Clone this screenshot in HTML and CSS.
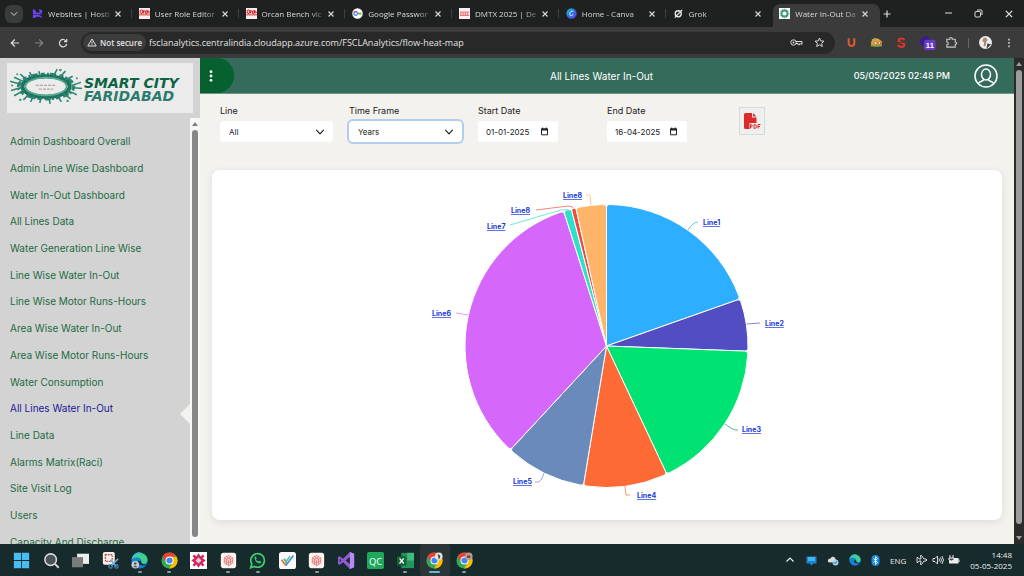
FILE: index.html
```html
<!DOCTYPE html>
<html lang="en">
<head>
<meta charset="utf-8">
<title>Water In-Out Dashboard</title>
<link rel="stylesheet" href="styles.css">
</head>
<body>
<svg class="defs" width="0" height="0" aria-hidden="true">
  <symbol id="x" viewBox="0 0 8 8"><path d="M1.5 1.5l5 5M6.5 1.5l-5 5" stroke="currentColor" stroke-width="1.1" fill="none"/></symbol>
  <symbol id="chev" viewBox="0 0 10 10"><path d="M1.500 3.200L5 6.800l3.500-3.600" stroke="currentColor" stroke-width="1.200" fill="none" stroke-linecap="round" stroke-linejoin="round"/></symbol>
  <symbol id="orcan" viewBox="0 0 12 12"><path fill="#f7eeee" d="M0 0h12v12H0z"/><path fill="#d8262c" d="M0 7h12v1H0z"/><path d="M1 5c0-3 3-4 3-1s-3 2-3 0M5 6V2.500M5 4l1.500-1M7 5c0-3 2-2 2-.5S7 7 7 5M9.500 6V3l1.500 1v2" stroke="#d8262c" stroke-width="1.100" fill="none"/></symbol>
  <symbol id="cal" viewBox="0 0 9 9"><path d="M1.500 2h6v5.800h-6z" fill="none" stroke="#222" stroke-width="1"/><path d="M1 1.500h7v2H1zM2.200.5h1v1h-1zM5.800.5h1v1h-1z" fill="#222"/></symbol>
  <symbol id="chrome" viewBox="0 0 20 20"><circle cx="10" cy="10" r="9.500" fill="#35a853"/><path d="M1.800 5.200A9.500 9.500 0 0 1 18.300 5.500H10L6 12z" fill="#e94235"/><path d="M18.300 5.500A9.500 9.500 0 0 1 9.500 19.500L14 12 10 5.500z" fill="#fbbc05"/><circle cx="10" cy="10" r="4.700" fill="#fff"/><circle cx="10" cy="10" r="3.600" fill="#4285f4"/></symbol>
  <symbol id="edge" viewBox="0 0 20 20"><circle cx="10" cy="10" r="9.500" fill="#1682d5"/><path d="M.7 9C2-1 18-2 19.500 9c0 5-6 6-7.500 3 2-5-7-8-11.300-3z" fill="#3fd08c"/><path d="M.7 9C2 2 8-1 13 1 8 1 3 4 .7 9z" fill="#36b7ee"/><path d="M9 10c-2 3 1 6 6 6 2 0 3-1 3-1-4 0-7-2-6-4z" fill="#16323b"/></symbol>
  <symbol id="cube" viewBox="0 0 20 20"><rect x="1" y="1" width="18" height="18" rx="3" fill="#fbf4f3"/><path d="M10 4l5 3v6l-5 3-5-3V7zM5 7l5 3 5-3M10 10v6M7.500 5.500l5 3v6M12.500 5.500l-5 3v6M5 10l5 3 5-3" fill="none" stroke="#db5450" stroke-width=".8"/></symbol>
</svg>

<div class="tabstrip">
  <button class="tab-search" aria-label="Search tabs"><svg width="8" height="8"><use href="#chev"/></svg></button>
  <div class="tabs">
    <div class="tab"><svg class="fav" viewBox="0 0 12 12"><path fill="#6d43f2" d="M1 1l3 1.500V5h4l3 2H1zM8 1l3 1.500V6L8 4.500zM1 7.500h7l3 2V11L8 9.500H4V11H1z"/></svg><span class="title">Websites | Hosti</span><button class="close" aria-label="Close"><svg width="8" height="8"><use href="#x"/></svg></button></div>
    <div class="tab"><svg class="fav"><use href="#orcan"/></svg><span class="title">User Role Editor</span><button class="close" aria-label="Close"><svg width="8" height="8"><use href="#x"/></svg></button></div>
    <div class="tab"><svg class="fav"><use href="#orcan"/></svg><span class="title">Orcan Bench vic</span><button class="close" aria-label="Close"><svg width="8" height="8"><use href="#x"/></svg></button></div>
    <div class="tab"><svg class="fav" viewBox="0 0 12 12"><circle cx="6" cy="6" r="5.700" fill="#fff"/><circle cx="4" cy="6" r="2" fill="none" stroke="#4285f4" stroke-width="1.300"/><path d="M6 6h4.500" stroke="#34a853" stroke-width="1.500"/><path d="M2.300 5A2 2 0 0 1 5 4.200" stroke="#ea4335" stroke-width="1.300" fill="none"/><path d="M9 6v2" stroke="#fbbc05" stroke-width="1.300"/></svg><span class="title">Google Passwor</span><button class="close" aria-label="Close"><svg width="8" height="8"><use href="#x"/></svg></button></div>
    <div class="tab"><svg class="fav" viewBox="0 0 12 12"><path fill="#fbefef" d="M0 0h12v12H0z"/><path d="M1 4.500h10M1 8h10M2 5v3M4.500 5v3M7 5v3M9.500 5v3" stroke="#e45b60" stroke-width="1"/></svg><span class="title">DMTX 2025 | De</span><button class="close" aria-label="Close"><svg width="8" height="8"><use href="#x"/></svg></button></div>
    <div class="tab"><svg class="fav" viewBox="0 0 12 12"><defs><linearGradient id="cv" x2="1" y2="1"><stop stop-color="#18c0cf"/><stop offset=".5" stop-color="#2876e0"/><stop offset="1" stop-color="#7a2de6"/></linearGradient></defs><circle cx="6" cy="6" r="5.600" fill="url(#cv)"/><path d="M7.800 4.300C7.500 2.500 4.300 3.500 4.200 6.500c0 2.500 2.500 2.300 3.600.6" fill="none" stroke="#fff" stroke-width="1"/></svg><span class="title">Home - Canva</span><button class="close" aria-label="Close"><svg width="8" height="8"><use href="#x"/></svg></button></div>
    <div class="tab"><svg class="fav" viewBox="0 0 12 12"><circle cx="5.700" cy="6.300" r="3.300" fill="none" stroke="#eee" stroke-width="1.400"/><path d="M2 10.500L10 2" stroke="#eee" stroke-width="1.300"/></svg><span class="title">Grok</span><button class="close" aria-label="Close"><svg width="8" height="8"><use href="#x"/></svg></button></div>
    <div class="tab active"><svg class="fav" viewBox="0 0 12 12"><path fill="#fff" d="M0 0h12v12H0z"/><circle cx="6" cy="6" r="3.300" fill="none" stroke="#3b9876" stroke-width="2"/><circle cx="6" cy="6" r="4.800" fill="none" stroke="#3b9876" stroke-width="1" stroke-dasharray="1 1.400"/></svg><span class="title">Water In-Out Da</span><button class="close" aria-label="Close"><svg width="8" height="8"><use href="#x"/></svg></button></div>
  </div>
  <div class="window-area">
    <button class="plain" aria-label="New tab"><svg width="10" height="10" viewBox="0 0 10 10"><path d="M5 1.500v7M1.500 5h7" stroke="currentColor" stroke-width="1.200"/></svg></button>
    <span class="window-buttons">
      <button class="plain" aria-label="Minimize"><svg width="9" height="9" viewBox="0 0 9 9"><path d="M1 4h7" stroke="currentColor"/></svg></button>
      <button class="plain" aria-label="Restore"><svg width="9" height="9" viewBox="0 0 9 9"><rect x="1" y="2.500" width="5.500" height="5.500" rx="1" fill="none" stroke="currentColor"/><path d="M3 1h4q1 0 1 1v4" fill="none" stroke="currentColor"/></svg></button>
      <button class="plain" aria-label="Close window"><svg width="10" height="10" viewBox="0 0 8 8"><use href="#x"/></svg></button>
    </span>
  </div>
</div>

<div class="toolbar">
  <div class="nav">
    <button class="plain" aria-label="Back"><svg width="10" height="10" viewBox="0 0 10 10"><path d="M9 5H1.500M4.800 1.500L1.300 5l3.500 3.500" fill="none" stroke="currentColor" stroke-width="1.200"/></svg></button>
    <button class="plain dim" aria-label="Forward"><svg width="10" height="10" viewBox="0 0 10 10"><path d="M1 5h7.500M5.200 1.500L8.700 5 5.200 8.500" fill="none" stroke="currentColor" stroke-width="1.200"/></svg></button>
    <button class="plain" aria-label="Reload"><svg width="10" height="10" viewBox="0 0 10 10"><path d="M8.300 3.300A3.700 3.700 0 1 0 8.700 6M8.700 1v2.700H6" fill="none" stroke="currentColor" stroke-width="1.200"/></svg></button>
  </div>
  <div class="omnibox">
    <button class="secure"><svg width="10" height="9" viewBox="0 0 10 9"><path d="M5 1L9.200 8H.8z" fill="none" stroke="currentColor"/><path d="M5 3.500v2.200M5 6.300v1" stroke="currentColor"/></svg>Not secure</button>
    <input class="url" aria-label="Address" value="fsclanalytics.centralindia.cloudapp.azure.com/FSCLAnalytics/flow-heat-map">
    <button class="plain" aria-label="Passwords"><svg width="13" height="9" viewBox="0 0 13 9"><circle cx="3.500" cy="4.500" r="2.700" fill="none" stroke="currentColor"/><circle cx="3.500" cy="4.500" r=".9" fill="currentColor"/><path d="M6 3.500h6v2.700h-1.200v-1M6 5.500h2v1.200h1.500V5.500" fill="none" stroke="currentColor"/></svg></button>
    <button class="plain" aria-label="Bookmark"><svg width="11" height="11" viewBox="0 0 11 11"><path d="M5.500 1l1.300 2.900 3.200.3-2.400 2.100.7 3.200-2.800-1.700-2.800 1.700.7-3.200L1 4.200l3.200-.3z" fill="none" stroke="currentColor"/></svg></button>
  </div>
  <div class="extensions">
    <svg viewBox="0 0 14 14"><path d="M4 2.500v5.200c0 4 6 4 6 0V2.500" fill="none" stroke="#e0592f" stroke-width="2.200"/></svg>
    <svg viewBox="0 0 14 14"><path d="M1 9c0-5 3-7 8-6l4 3-1 5H3z" fill="#e3a63c"/><path d="M1 11c2-2 4 1 6-.5 2 1 3-1 6 0" stroke="#72a63a" stroke-width="1.600" fill="none"/><path d="M2 4.500l4-2" stroke="#84b64a" stroke-width="1.500"/><circle cx="6" cy="7.500" r="1.800" fill="#eee" stroke="#c25a2b"/><circle cx="10" cy="7.500" r="1.500" fill="#eee" stroke="#c25a2b"/></svg>
    <svg viewBox="0 0 14 14"><path d="M10 4.500C9 2 4 2 4 5s6 1.500 6 4.500-5.500 3-6.500 0" fill="none" stroke="#d8392f" stroke-width="2.200"/><path d="M2 7h10" stroke="#832720"/></svg>
    <svg class="ext-badge" viewBox="0 0 18 16"><path d="M7 0l6 5-3 6H3L0 6z" fill="#3a1a91"/><rect x="5.500" y="4.500" width="12" height="11" rx="2" fill="#6a3cc2"/><text x="11.500" y="13" text-anchor="middle" class="badge">11</text></svg>
    <svg viewBox="0 0 14 14"><path d="M2 3.500h3.200c-.4-2.500 3-2.500 2.600 0H11v3c2-.2 2 2.700 0 2.500v3H2V9.500c2 0 2-3 0-3z" fill="none" stroke="#c9c9c9" stroke-width="1.200"/></svg>
    <i class="rule"></i>
    <svg viewBox="0 0 14 14"><circle cx="7" cy="7" r="7" fill="#eee"/><path d="M5 2c4-1 5 2 3 4l-1 5H5l.500-4-2-2z" fill="#a78b6a"/><path d="M9 8l4 1-5 5z" fill="#393a42"/></svg>
    <svg viewBox="0 0 14 14"><path d="M7 1v2.500M7 5.700v2.500M7 10.500V13" stroke="#ddd" stroke-width="2"/></svg>
  </div>
</div>

<div class="app">
  <aside class="sidebar">
    <div class="brand">
      <svg class="splash" viewBox="0 0 72 36" aria-hidden="true">
        <g fill="none" stroke="#2b8570">
          <ellipse cx="36" cy="18" rx="27" ry="12" stroke-width="3" stroke-dasharray="4 2 2 1 6 3"/>
          <ellipse cx="36" cy="18" rx="23" ry="10" stroke-width="4" stroke="#1f7461"/>
          <ellipse cx="36" cy="18" rx="20" ry="8.500" stroke-width="2" stroke="#5aa994"/>
        </g>
        <ellipse cx="36" cy="18" rx="19" ry="7.500" fill="#ececec"/>
        <path d="M26 17h20M29 20.500h14" stroke="#b9a5a2" stroke-width="1.200" stroke-dasharray="3 1"/>
        <path d="M1 13l11 3M5 9l9 4M2 22l10-3M5 27l9-5M11 6l7 6M14 31l6-6M20 4l3 5M21 33l3-6M29 3l1 4M47 1l-4 7M55 3l-6 6M62 8l-8 4M70 14l-9 3M71 20l-10-1M66 26l-9-4M60 30l-7-5M51 33l-4-6M40 35l-1-6M30 34l1-5" stroke="#2b8570" stroke-width="1.500"/>
        <g fill="#46937f"><circle cx="3" cy="17" r="1"/><circle cx="8" cy="6" r="1"/><circle cx="50" cy="2" r="1.300"/><circle cx="66" cy="10" r="1"/><circle cx="57" cy="32" r="1.200"/><circle cx="11" cy="31" r="1.200"/></g>
      </svg>
      <div class="brand-name"><span>SMART CITY</span><span class="city">FARIDABAD</span></div>
    </div>
    <div class="menu-scroll">
      <nav>
        <ul class="menu">
          <li><a href="#">Admin Dashboard Overall</a></li>
          <li><a href="#">Admin Line Wise Dashboard</a></li>
          <li><a href="#">Water In-Out Dashboard</a></li>
          <li><a href="#">All Lines Data</a></li>
          <li><a href="#">Water Generation Line Wise</a></li>
          <li><a href="#">Line Wise Water In-Out</a></li>
          <li><a href="#">Line Wise Motor Runs-Hours</a></li>
          <li><a href="#">Area Wise Water In-Out</a></li>
          <li><a href="#">Area Wise Motor Runs-Hours</a></li>
          <li><a href="#">Water Consumption</a></li>
          <li class="current"><a href="#">All Lines Water In-Out</a></li>
          <li><a href="#">Line Data</a></li>
          <li><a href="#">Alarms Matrix(Raci)</a></li>
          <li><a href="#">Site Visit Log</a></li>
          <li><a href="#">Users</a></li>
          <li><a href="#">Capacity And Discharge</a></li>
        </ul>
      </nav>
      <div class="scrollbar light"><i class="up"></i><i class="thumb"></i></div>
    </div>
  </aside>
  <main class="content">
    <header class="topbar">
      <button class="toggle" aria-label="Menu"><svg width="4" height="12" viewBox="0 0 4 12"><g fill="#fff"><circle cx="2" cy="1.700" r="1.400"/><circle cx="2" cy="6" r="1.400"/><circle cx="2" cy="10.300" r="1.400"/></g></svg></button>
      <h1>All Lines Water In-Out</h1>
      <div class="account"><time>05/05/2025 02:48 PM</time>
        <button class="plain" aria-label="Account"><svg width="24" height="24" viewBox="0 0 24 24" fill="none" stroke="#fff" stroke-width="1.500"><circle cx="12" cy="12" r="11"/><ellipse cx="12" cy="10.500" rx="4.500" ry="5.500"/><path d="M4.500 19.500c1-2.500 4-2 5-3.500v-1.500M19.500 19.500c-1-2.500-4-2-5-3.500v-1.500"/></svg></button></div>
    </header>
    <form class="filters">
      <div class="field"><label for="line">Line</label><span class="select"><select id="line"><option>All</option></select><svg width="10" height="10"><use href="#chev"/></svg></span></div>
      <div class="field"><label for="frame">Time Frame</label><span class="select focus"><select id="frame"><option>Years</option></select><svg width="10" height="10"><use href="#chev"/></svg></span></div>
      <div class="field"><label for="start">Start Date</label><span class="date"><input id="start" value="01-01-2025"><svg width="9" height="9"><use href="#cal"/></svg></span></div>
      <div class="field"><label for="end">End Date</label><span class="date"><input id="end" value="16-04-2025"><svg width="9" height="9"><use href="#cal"/></svg></span></div>
      <button type="button" class="pdf" aria-label="Export PDF"><svg width="18" height="18" viewBox="0 0 18 18"><path d="M2.500 1H9v4.500h4.500V11H6.500v6h-4Q1 17 1 15.500v-13Q1 1 2.500 1zM10 1l3.500 3.500H10z" fill="#dc2b2b"/><path d="M7.500 16.500v-4h1q1.500 1.300 0 2.500h-1M11 12.500v4q2.500 0 2.500-2t-2.500-2zM15 16.500v-4h2.500M15 14.500h2" fill="none" stroke="#dc2b2b"/></svg></button>
    </form>
    <section class="card">
      <svg class="chart" viewBox="0 0 790 350" role="group" aria-label="Water in-out by line">
        <g id="slices"></g>
        <g fill="none" stroke-width=".7">
          <path d="M476 60q5-8 10-8" stroke="#2dadff"/><path d="M535 154l13-1" stroke="#544fc5"/>
          <path d="M513 254q8 6 11 6h2" stroke="#00a35a"/><path d="M413 316l1 9h4" stroke="#fe6a35"/>
          <path d="M332 303q-3 9-6 9h-3" stroke="#6b8abc"/><path d="M256 145l-12-2" stroke="#d568fb"/>
          <path d="M298 55l51-15q5-1 7-0" stroke="#2ee0ca"/><path d="M324 40l32-4q4 0 5 2" stroke="#fa4b42"/>
          <path d="M379 35l-1-10h-4" stroke="#feb56a"/>
        </g>
        <g class="labels">
          <a href="#"><text x="491" y="55">Line1</text></a>
          <a href="#"><text x="553" y="156">Line2</text></a>
          <a href="#"><text x="530" y="262">Line3</text></a>
          <a href="#"><text x="425" y="328">Line4</text></a>
          <a href="#"><text x="301" y="314">Line5</text></a>
          <a href="#"><text x="220" y="146">Line6</text></a>
          <a href="#"><text x="275" y="59">Line7</text></a>
          <a href="#"><text x="299" y="43">Line8</text></a>
          <a href="#"><text x="351" y="28">Line8</text></a>
        </g>
      </svg>
    </section>
  </main>
  <div class="scrollbar dark"><i class="up"></i><i class="thumb"></i><i class="down"></i></div>
</div>

<footer class="taskbar">
  <div class="apps">
    <button aria-label="Start"><svg viewBox="0 0 20 20"><path d="M1 1h8.500v8.500H1zM10.500 1H19v8.500h-8.500zM1 10.500h8.500V19H1zM10.500 10.500H19V19h-8.500z" fill="#48bdf2"/></svg></button>
    <button aria-label="Search"><svg viewBox="0 0 20 20"><circle cx="9" cy="9" r="6.800" fill="#4a5356" stroke="#dcdcdc" stroke-width="1.800"/><path d="M14 14l4.500 4.500" stroke="#dcdcdc" stroke-width="2.200"/></svg></button>
    <button aria-label="Task view"><svg viewBox="0 0 20 20"><path d="M6 2h14v12H6z" fill="#eee"/><path d="M0 6h13v12H0z" fill="#777c7d"/></svg></button>
    <button aria-label="Snipping Tool"><svg viewBox="0 0 20 20"><rect width="14" height="15" x="1" rx="2" fill="#f4f0ee"/><path d="M4 3h8v8H4z" fill="none" stroke="#c9403c" stroke-width="1.500" stroke-dasharray="2 1"/><path d="M10 9l7 8M19 8l-8 8" stroke="#72afd0" stroke-width="1.800"/><circle cx="10" cy="17" r="2" fill="none" stroke="#3c83b0" stroke-width="1.500"/><circle cx="17" cy="17" r="2" fill="none" stroke="#3c83b0" stroke-width="1.500"/></svg></button>
    <button class="open" aria-label="Edge"><svg viewBox="0 0 20 20"><use href="#edge"/><circle cx="5" cy="15" r="4.500" fill="#c9cdd0"/><circle cx="5" cy="13.500" r="1.500" fill="#555"/><path d="M2.500 18q2.500-4 5 0z" fill="#555"/></svg></button>
    <button class="open" aria-label="Chrome"><svg viewBox="0 0 20 20"><use href="#chrome"/></svg></button>
    <button aria-label="Design app"><svg viewBox="0 0 20 20"><path fill="#fff" d="M0 0h20v20H0z"/><path d="M10 1.500l3 4.500 5.500 4-5.500 4-3 4.500L7 14l-5.500-4L7 6z" fill="#c92b63"/><path d="M4 4l12 12M16 4L4 16" stroke="#c92b63" stroke-width="3"/><path d="M10 6.500l3.500 3.500-3.500 3.500L6.500 10z" fill="#f6c6d4"/></svg></button>
    <button class="open" aria-label="SCADA"><svg viewBox="0 0 20 20"><use href="#cube"/></svg></button>
    <button class="open" aria-label="WhatsApp"><svg viewBox="0 0 20 20"><path d="M2 18.500l1.300-4.500A8 8 0 1 1 6.500 17z" fill="#16323b" stroke="#42cf66" stroke-width="2"/><path d="M6.500 6q1-1.500 2 0l.5 1.500-.8 1q1 2 3 2.700l1-1 2 1q0 2.300-2.500 2.300-5-1.200-5.200-7.500z" fill="#42cf66"/></svg></button>
    <button aria-label="Tasks"><svg viewBox="0 0 20 20"><rect width="20" height="20" rx="3" fill="#fafafa"/><path d="M3 9l5 7" stroke="#e9703e" stroke-width="2"/><path d="M6 8l4 6" stroke="#4fae79" stroke-width="2"/><path d="M8 16l9-12" stroke="#4a91d3" stroke-width="2"/><path d="M7 13l6-8" stroke="#61c3a5" stroke-width="2"/></svg></button>
    <button class="open" aria-label="SCADA client"><svg viewBox="0 0 20 20"><use href="#cube"/></svg></button>
    <button aria-label="Visual Studio"><svg viewBox="0 0 20 20"><path d="M14 0l5 2v16l-5 2L6 12l-4 3-2-1V6l2-1 4 3z" fill="#8e5bd1"/><path d="M14 6v8l-5-4zM2 8v4l2-2z" fill="#16282f"/><path d="M14 0l5 2v16l-5 2z" fill="#b68cf0"/></svg></button>
    <button aria-label="QC"><svg viewBox="0 0 20 20"><rect width="20" height="20" rx="2" fill="#1da85b"/><text x="10" y="15" text-anchor="middle" class="qc">QC</text></svg></button>
    <button class="open" aria-label="Excel"><svg viewBox="0 0 20 20"><path d="M5 1h15v18H5z" fill="#23945a"/><path d="M12 1h8v9h-8z" fill="#3fbd7c"/><path d="M0 5h11v11H0z" fill="#126339"/><path d="M3 7.500l5 6M8 7.500l-5 6" stroke="#fff" stroke-width="1.500"/></svg></button>
    <button class="open front" aria-label="Chrome, work profile"><svg viewBox="0 0 20 20"><use href="#chrome"/><circle cx="15" cy="5" r="4.500" fill="#e8e4df"/><path d="M14 2l3 3-2 4z" fill="#333"/></svg></button>
    <button class="open" aria-label="Chrome, second profile"><svg viewBox="0 0 20 20"><use href="#chrome"/><circle cx="15" cy="5" r="4.500" fill="#bd9a91"/><path d="M13 4h4v3h-4z" fill="#6d4c48"/></svg></button>
  </div>
  <div class="tray">
    <svg width="10" height="10" viewBox="0 0 10 10"><path d="M1.500 6.500L5 3l3.500 3.500" fill="none" stroke="#eee" stroke-width="1.200"/></svg>
    <svg width="11" height="11" viewBox="0 0 11 11"><path d="M.5 1.500h10v7h-3l-2 2-2-2h-3z" fill="#1c84cf"/><path d="M2 2h7v4H2z" fill="#45b3ee"/></svg>
    <svg width="12" height="11" viewBox="0 0 12 11"><path d="M2 7.500C-.5 6 1.500 3 3.500 3.500c1-3 5-2 5 .5L11 7z" fill="#dcdcdc"/><circle cx="8.500" cy="7.500" r="3" fill="#9fd2ee"/><path d="M7 7.500l1 1 2-2" stroke="#246" fill="none"/></svg>
    <svg width="12" height="12" viewBox="0 0 20 20"><use href="#edge"/></svg>
    <svg width="9" height="11" viewBox="0 0 9 11"><rect width="8" height="11" x=".5" rx="4" fill="#188be6"/><path d="M2.500 3.500l4 4-2 1.800V1.700l2 1.800-4 4" fill="none" stroke="#fff" stroke-width=".9"/></svg>
    <span class="lang">ENG</span>
    <span class="status">
      <svg width="12" height="12" viewBox="0 0 12 12"><path d="M3 5h2L4.500 1.500h1L8 5h2q2 1 0 2H8L5.500 10.500h-1L5 7H3L2 8.500H1V3.500h1z" fill="none" stroke="#eee" stroke-width=".9"/></svg>
      <svg width="12" height="10" viewBox="0 0 12 10" fill="none" stroke="#eee" stroke-width=".9"><path d="M1 3.500h2L5.500 1v8L3 6.500H1zM7 3.500q1 1.500 0 3M8.500 2.300q2 2.700 0 5.400M10 1q3 4 0 8"/></svg>
      <svg width="12" height="10" viewBox="0 0 12 10"><path d="M1 3h9.500v5.500H1z" fill="#eee"/><path d="M10.500 4.500h1v2.500h-1z" fill="#eee"/><path d="M2 0v3M5 0v3M1 3h5v2q-2.500 2-5 0z" stroke="#eee" fill="#445"/></svg>
    </span>
    <div class="clock"><time>14:48</time><time>05-05-2025</time></div>
  </div>
</footer>
<script src="chart.js"></script>
</body>
</html>
```
FILE: styles.css
```css
* { box-sizing: border-box; }
body { margin: 0; height: 100vh; display: flex; flex-direction: column; overflow: hidden; font-family: Inter, "Open Sans", sans-serif; font-size: 9px; color: #222; background: #1f2121; }
button, input, select { font: inherit; color: inherit; border: 0; margin: 0; padding: 0; background: none; }
svg { display: block; flex: none; }
.defs { position: absolute; }
.plain { display: flex; align-items: center; justify-content: center; color: #dcdcdc; }

/* Browser tabs */
.tabstrip { display: flex; flex: none; height: 27px; background: #1f2121; color: #d8d8d8; font-family: "Open Sans", sans-serif; font-size: 8px; }
.tab-search { width: 18px; height: 18px; margin: 5px 3px 0 5px; border-radius: 6px; background: #3a3b3b; display: grid; place-items: center; }
.tabs { flex: 1; min-width: 0; display: flex; }
.tab { flex: 1; min-width: 0; display: flex; align-items: center; padding: 0 7px 0 6px; position: relative; }
.tab:not(.active)::after { content: ""; position: absolute; right: 1px; top: 9px; height: 9px; width: 1px; background: #3e4040; }
.tab:nth-last-child(2)::after { display: none; }
.fav { width: 11px; height: 11px; margin-right: 5px; }
.title { flex: 1; min-width: 0; white-space: nowrap; overflow: hidden; margin-right: 2px; mask-image: linear-gradient(90deg, #000 75%, #0003); }
.close { display: flex; width: 8px; margin-right: 4px; }
.tab.active { background: #3b3b3b; border-radius: 7px 7px 0 0; margin: 4px 0 0; padding-bottom: 4px; }
.window-area { width: 144px; display: flex; align-items: center; justify-content: space-between; padding: 0 10px 0 2px; }
.window-buttons { display: flex; gap: 21px; }

/* Browser toolbar */
.toolbar { display: flex; align-items: center; flex: none; height: 31px; background: #3b3b3b; color: #e2e2e2; padding: 0 10px; font-family: "Open Sans", sans-serif; }
.nav { display: flex; gap: 14px; }
.dim { color: #808080; }
.omnibox { flex: 1; min-width: 0; display: flex; align-items: center; gap: 11px; height: 22px; margin-left: 13px; padding: 0 10px 0 2px; background: #282828; border-radius: 11px; }
.secure { display: flex; align-items: center; gap: 3px; height: 17px; padding: 0 4px; border-radius: 9px; background: #3c3c3c; font-size: 8px; font-weight: 600; white-space: nowrap; }
.url { flex: 1; min-width: 0; font-size: 9px; margin-left: -8px; }
.extensions { display: flex; align-items: center; gap: 12px; margin-left: 10px; }
.extensions svg { width: 13px; height: 13px; }
.extensions .ext-badge { width: 17px; height: 16px; margin: 0 -3px 0 -1px; }
.extensions svg:last-child { width: 10px; height: 10px; }
.rule { width: 1px; height: 10px; background: #666; margin: 0 -2px; }
.badge { font: bold 8px "Liberation Sans", sans-serif; fill: #fff; }

/* Page */
.app { flex: 1; min-height: 0; display: flex; background: #f3f2ee; }
.sidebar { width: 200px; flex: none; display: flex; flex-direction: column; background: #d3d3d3; }
.brand { display: flex; align-items: center; flex: none; height: 50px; margin: 5px 7px; background: #ebebeb; padding-left: 2px; overflow: hidden; }
.splash { width: 74px; height: 37px; margin-bottom: 4px; }
.brand-name { display: flex; flex-direction: column; font: italic bold 14px/13px "DejaVu Sans", sans-serif; color: #0b6344; margin: 3px 0 0 1px; white-space: nowrap; }
.city { color: #2b7c6b; }
.menu-scroll { flex: 1; min-height: 0; display: flex; overflow: hidden; }
nav { flex: 1; min-width: 0; padding-top: 10px; }
.menu { list-style: none; margin: 0; padding: 0 0 0 10px; display: grid; grid-auto-rows: 1fr; height: 427px; align-items: center; font-size: 10px; }
.menu li { position: relative; }
.menu a { color: #226b44; text-decoration: none; }
.menu .current a { color: #23179a; }
.current::after { content: ""; position: absolute; right: 0; top: 2px; border: 10px solid transparent; border-left-width: 0; border-right-color: #f3f2ee; }

.scrollbar { width: 10px; flex: none; display: flex; flex-direction: column; align-items: center; gap: 4px; padding: 4px 0; }
.light { background: #f7f7f7; padding-bottom: 7px; }
.dark { background: #2b2b2b; }
.up { border: 3px solid transparent; border-top: 0; border-bottom: 4px solid #7c7c7c; }
.down { border: 3px solid transparent; border-bottom: 0; border-top: 4px solid #9c9c9c; }
.thumb { flex: 1; width: 6px; border-radius: 3px; background: #878787; }
.dark .up { border-bottom-color: #9c9c9c; }
.dark .thumb { background: #9c9c9c; margin-bottom: 8px; }

.content { flex: 1; min-width: 0; }
.topbar { display: grid; grid-template-columns: 1fr auto 1fr; align-items: center; height: 36px; background: #356b5b; color: #fff; border-bottom: 1px solid #6d9687; }
.topbar h1 { margin: 0 11px 0 0; font-size: 10px; font-weight: 400; }
.toggle { width: 34px; height: 35px; padding-left: 9px; display: flex; align-items: center; background: #07602f; border-radius: 0 17px 17px 0; }
.account { display: flex; align-items: center; justify-content: flex-end; gap: 24px; padding-right: 16px; font-weight: 500; white-space: nowrap; }

.filters { display: grid; grid-template-columns: repeat(6, 1fr); align-items: start; padding: 11px 20px 0; }
.field { display: flex; flex-direction: column; align-items: flex-start; gap: 4px; }
.field label { line-height: 12px; }
.select, .date { display: flex; align-items: center; position: relative; background: #fff; border-radius: 4px; height: 21px; }
.select { width: 113px; }
.select select { appearance: none; width: 100%; height: 100%; padding-left: 9px; font-size: 8px; outline: 0; }
.select svg { position: absolute; right: 8px; pointer-events: none; }
.focus { box-shadow: 0 0 0 2px #b3cdf0; }
.date { width: 80px; border-radius: 2px; padding: 0 9px 0 8px; }
.date input { flex: 1; min-width: 0; width: 0; font-size: 8px; outline: 0; }
.pdf { justify-self: start; width: 26px; height: 28px; margin: 2px 0 0 3px; display: grid; place-items: center; background: #efeff0; border: 1px solid #d9d9da; }
.card { margin: 28px 12px 0; background: #fff; border-radius: 8px; box-shadow: 0 2px 8px #00000018; }
.chart { width: 100%; height: auto; }
.labels { font-size: 7px; font-weight: 700; }
.labels text { fill: #1738d8; text-decoration: underline; }

/* Taskbar */
.taskbar { flex: none; height: 32px; display: flex; align-items: center; justify-content: space-between; padding: 0 12px 0 7px; background: #172a2c; color: #eee; font-family: "Open Sans", sans-serif; font-size: 8px; }
.apps { display: grid; grid-template-columns: repeat(16, 1fr); width: 472px; height: 100%; }
.apps button { display: grid; place-items: center; position: relative; }
.apps svg { width: 17px; height: 17px; }
.open::after { content: ""; position: absolute; bottom: 3px; width: 4px; height: 2px; border-radius: 1px; background: #92999a; }
.apps .front { background: #2c3637; border-radius: 3px; }
.front::after { width: 11px; background: #65b8d8; }
.qc { font: 11px "Open Sans", sans-serif; fill: #fff; }
.tray { display: flex; align-items: center; gap: 10px; }
.tray > svg:first-child { margin-right: 1px; }
.status { display: flex; align-items: center; gap: 4px; }
.clock { display: flex; flex-direction: column; text-align: right; line-height: 11px; }
```
FILE: chart.js
```js
const slices = [
  { end: 70.6, color: "#2daefe" },
  { end: 92.1, color: "#534dc3" },
  { end: 154.8, color: "#00e272" },
  { end: 189.4, color: "#fe6a35" },
  { end: 222.8, color: "#6b8abc" },
  { end: 342.4, color: "#d568fb" },
  { end: 345.6, color: "#2ee0ca" },
  { end: 347.5, color: "#ee4b45" },
  { end: 360, color: "#feb56a" }
];
const center = { x: 394.5, y: 176 };
const radius = 141.5;
const corner = 3;

function point(angle, r) {
  const t = angle * Math.PI / 180;
  return (center.x + r * Math.sin(t)).toFixed(2) + " " + (center.y - r * Math.cos(t)).toFixed(2);
}

let start = 0;
for (const slice of slices) {
  const end = slice.end;
  const turn = Math.min(1.2, (end - start) / 3);
  const path = document.createElementNS("http://www.w3.org/2000/svg", "path");
  path.setAttribute("d",
    `M${center.x} ${center.y}L${point(start, radius - corner)}` +
    `Q${point(start, radius)} ${point(start + turn, radius)}` +
    `A${radius} ${radius} 0 0 1 ${point(end - turn, radius)}` +
    `Q${point(end, radius)} ${point(end, radius - corner)}Z`);
  path.setAttribute("fill", slice.color);
  path.setAttribute("stroke", "#fff");
  path.setAttribute("stroke-linejoin", "round");
  document.getElementById("slices").append(path);
  start = end;
}
```
